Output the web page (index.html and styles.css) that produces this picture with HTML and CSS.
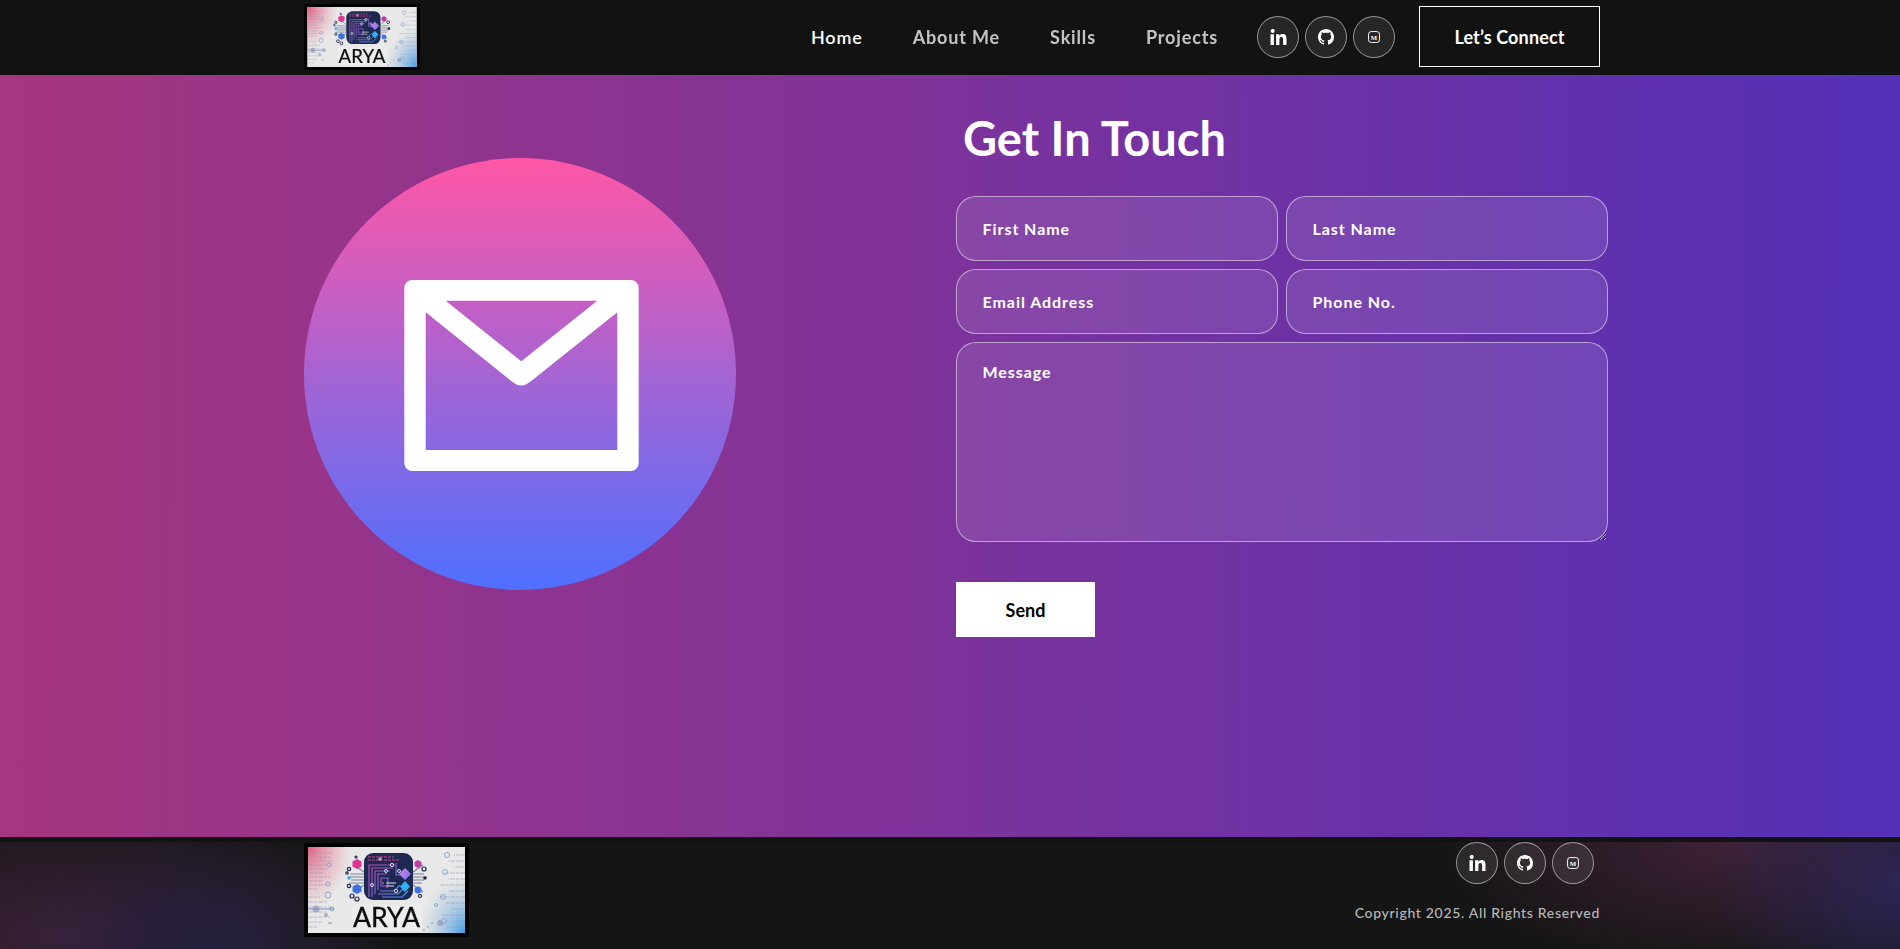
FILE: index.html
```html
<!DOCTYPE html>
<html lang="en">
<head>
<meta charset="utf-8">
<title>Arya</title>
<link rel="stylesheet" href="styles.css">
</head>
<body>
<svg class="defs" width="0" height="0" aria-hidden="true">
  <defs>
    <radialGradient id="pinkCorner" cx="0" cy="0" r="1">
      <stop offset="0" stop-color="#e45a7c"/>
      <stop offset=".55" stop-color="#e98da4" stop-opacity=".55"/>
      <stop offset="1" stop-color="#e8a0b0" stop-opacity="0"/>
    </radialGradient>
    <radialGradient id="blueCorner" cx="1" cy="1" r="1">
      <stop offset="0" stop-color="#3c9fe8"/>
      <stop offset=".5" stop-color="#8ab8e2" stop-opacity=".6"/>
      <stop offset="1" stop-color="#a9c4de" stop-opacity="0"/>
    </radialGradient>
    <linearGradient id="chipTrace" gradientUnits="userSpaceOnUse" x1="58" y1="8" x2="104" y2="52">
      <stop offset="0" stop-color="#e83d9c"/>
      <stop offset=".5" stop-color="#8a63d8"/>
      <stop offset="1" stop-color="#2fb0f0"/>
    </linearGradient>
    <linearGradient id="diamondTop" x1="0" y1="0" x2="1" y2="1">
      <stop offset="0" stop-color="#e07be8"/>
      <stop offset="1" stop-color="#6d7cf4"/>
    </linearGradient>
    <linearGradient id="circleFill" x1="0" y1="0" x2="0" y2="1">
      <stop offset="0" stop-color="#ff57a6"/>
      <stop offset="1" stop-color="#4e70ff"/>
    </linearGradient>
    <symbol id="logo" viewBox="0 0 157 86">
      <rect width="157" height="86" fill="#e7e8e7"/>
      <rect width="44" height="60" fill="url(#pinkCorner)"/>
      <rect x="112" y="30" width="45" height="56" fill="url(#blueCorner)"/>
      <g stroke="#8f93ad" stroke-width=".9" opacity=".6" stroke-dasharray="5 1 3 1">
        <path d="M0 6H26M0 10H22M0 14H24M0 18H18M0 22H20M0 26H16M0 30H22M0 34H14M0 38H18M0 42H10M0 50H12M0 55H20M0 60H24M0 65H18M0 70H22M0 75H14M0 80H10"/>
        <path d="M157 8H146M157 14H140M157 20H146M157 26H136M157 32H140M157 38H132M157 44H142M157 50H130M157 56H138M157 62H144M157 68H134M157 74H146M157 80H138"/>
      </g>
      <g fill="none" stroke="#7f9cc8" stroke-width="1" opacity=".85">
        <circle cx="21" cy="18" r="2"/><circle cx="20" cy="37" r="2"/><circle cx="20" cy="48" r="3"/>
        <circle cx="24" cy="62" r="2"/><circle cx="139" cy="8" r="2.5"/><circle cx="137" cy="25" r="2.5"/>
        <circle cx="135" cy="50" r="2.5"/><circle cx="136" cy="74" r="2.5"/><circle cx="128" cy="58" r="1.5"/>
      </g>
      <g fill="#9aa0bc" opacity=".8">
        <circle cx="8" cy="62" r="3.5"/><circle cx="18" cy="68" r="2"/><circle cx="132" cy="76" r="3"/>
        <circle cx="120" cy="80" r="1"/><circle cx="124" cy="76" r="1"/><circle cx="116" cy="83" r="1"/>
      </g>
      <path d="M0 62H26M20 76H24" stroke="#7f8db8" stroke-width="1"/>
      <g stroke="#7d8299" stroke-width="1.1" fill="none">
        <path d="M42 27H57M40 30H57M43 33H57M41 36H57M105 27H116M105 30H118M105 33H116M105 36H114"/>
        <path d="M46 18L56 25M115 18L105 25M46 45L56 38M115 45L105 38"/>
      </g>
      <g fill="none" stroke="#232a4c" stroke-width="1.2">
        <circle cx="41" cy="22" r="1.7"/><circle cx="39" cy="26" r="1.2"/><circle cx="41" cy="39" r="1.7"/>
        <circle cx="44" cy="49" r="2"/><circle cx="49" cy="52" r="2"/><circle cx="116" cy="22" r="2"/>
        <circle cx="112" cy="49" r="1.5"/><circle cx="48" cy="10" r="1"/>
      </g>
      <circle cx="117" cy="31" r="1.8" fill="#232a4c"/>
      <circle cx="41" cy="31" r="1.7" fill="#35a8f2"/>
      <path d="M49 12L53.500 14.500V19.500L49 22 44.500 19.500V14.500Z" fill="#e03590"/>
      <path d="M110 13L113.500 15V19L110 21 106.500 19V15Z" fill="#c23ca8"/>
      <path d="M49 37L53.500 39.500V44.500L49 47 44.500 44.500V39.500Z" fill="#3f6fe2"/>
      <circle cx="110" cy="43" r="3.500" fill="#3e74e6"/>
      <rect x="56" y="6" width="49" height="47" rx="9" fill="#1d2950"/>
      <g fill="none" stroke="url(#chipTrace)" stroke-width="1.1">
        <path d="M60 13H92M60 10H86" stroke="#d8408f" stroke-dasharray="3 1"/>
        <path d="M61 50V18H87M64 50V21H85M67 47V24H82M70 43V27H79M73 31H80V39H73Z"/>
        <path d="M72 44H86L92 38M70 47H90L96 41M74 50H94L100 44M88 16V28H97"/>
      </g>
      <path d="M78 36H88M78 39H86" stroke="#dfe4ee" stroke-width="1"/>
      <circle cx="75" cy="36" r="1" fill="#e2408f"/>
      <circle cx="79" cy="40" r="1" fill="#e2408f"/>
      <path d="M97 21L103 27 97 33 91 27Z" fill="url(#diamondTop)"/>
      <path d="M97 34L102 39.500 97 45 92 39.500Z" fill="#2fb0f4"/>
      <g fill="none" stroke="#d6dcea" stroke-width="1">
        <circle cx="84" cy="18" r="1.700"/><circle cx="78" cy="24" r="1.500"/><circle cx="91" cy="24" r="1.500"/>
        <circle cx="64" cy="38" r="1.500"/><circle cx="88" cy="44" r="1.700"/><circle cx="72" cy="12" r="1.200"/>
      </g>
      <rect x="44" y="57" width="70" height="27" fill="#ececec"/>
      <text class="logo-word" x="78.500" y="80" text-anchor="middle" textLength="67" lengthAdjust="spacingAndGlyphs">ARYA</text>
    </symbol>
    <symbol id="ic-linkedin" viewBox="0 0 16 16">
      <path fill="#fff" d="M0 5.3h3.4V16H0zM1.700 0a2 2 0 1 1 0 3.900 2 2 0 0 1 0-3.900zM5.600 5.300h3.200v1.500c.5-.9 1.600-1.800 3.300-1.800 3.400 0 3.900 2.200 3.900 5.100V16h-3.400v-5.100c0-1.300 0-2.900-1.700-2.900s-2 1.400-2 2.800V16H5.600z"/>
    </symbol>
    <symbol id="ic-github" viewBox="0 0 16 16">
      <path fill="#fff" d="M8 0C3.580 0 0 3.580 0 8c0 3.540 2.290 6.530 5.470 7.590.4.070.55-.17.55-.38 0-.19-.01-.82-.01-1.490-2.010.37-2.530-.49-2.690-.94-.09-.23-.48-.94-.82-1.130-.28-.15-.68-.52-.01-.53.63-.01 1.080.58 1.230.82.72 1.210 1.870.87 2.330.66.07-.52.28-.87.51-1.070-1.780-.2-3.640-.89-3.640-3.950 0-.87.31-1.590.82-2.150-.08-.2-.36-1.020.08-2.120 0 0 .67-.21 2.200.82.64-.18 1.320-.27 2-.27s1.360.09 2 .27c1.530-1.040 2.200-.82 2.200-.82.44 1.100.16 1.920.08 2.120.51.56.82 1.270.82 2.150 0 3.070-1.870 3.750-3.650 3.950.29.25.54.73.54 1.480 0 1.070-.01 1.930-.01 2.200 0 .21.15.46.55.38A8.010 8.010 0 0 0 16 8c0-4.420-3.580-8-8-8z"/>
    </symbol>
    <symbol id="ic-medium" viewBox="0 0 16 16">
      <rect x=".75" y=".75" width="14.500" height="14.500" rx="3.500" fill="none" stroke="#fff" stroke-width="1.300"/>
      <text class="medium-mark" x="8" y="11.400" text-anchor="middle">M</text>
    </symbol>
  </defs>
</svg>

<header class="topbar">
  <div class="shell topbar-inner">
    <a class="logo logo-small" href="#"><svg class="logo-art"><use href="#logo"/></svg></a>
    <nav class="nav-links">
      <a class="nav-link is-active" href="#">Home</a>
      <a class="nav-link" href="#">About Me</a>
      <a class="nav-link" href="#">Skills</a>
      <a class="nav-link" href="#">Projects</a>
    </nav>
    <div class="socials">
      <a class="social" href="#"><svg class="ic-in"><use href="#ic-linkedin"/></svg></a>
      <a class="social" href="#"><svg class="ic-gh"><use href="#ic-github"/></svg></a>
      <a class="social" href="#"><svg class="ic-md"><use href="#ic-medium"/></svg></a>
    </div>
    <button class="connect" type="button">Let’s Connect</button>
  </div>
</header>

<main class="contact">
  <div class="shell contact-grid">
    <div class="badge">
      <svg class="badge-art" viewBox="0 0 432 432">
        <circle cx="216" cy="216" r="216" fill="url(#circleFill)"/>
        <path fill="#fff" fill-rule="evenodd" d="M108.300 122H326.700A8 8 0 0 1 334.700 130V305A8 8 0 0 1 326.700 313H108.300A8 8 0 0 1 100.300 305V130A8 8 0 0 1 108.300 122ZM141.700 142.700H293.300L217.300 203.300ZM121.700 154.300L208.500 224Q217.300 231 226 224L313.300 154.300V292H121.700Z"/>
      </svg>
    </div>
    <section class="form-col">
      <h1 class="form-title">Get In Touch</h1>
      <form class="form-grid">
        <input class="field" type="text" placeholder="First Name">
        <input class="field" type="text" placeholder="Last Name">
        <input class="field" type="email" placeholder="Email Address">
        <input class="field" type="tel" placeholder="Phone No.">
        <textarea class="field field-message" placeholder="Message"></textarea>
        <button class="send" type="submit">Send</button>
      </form>
    </section>
  </div>
</main>

<footer class="footer">
  <div class="shell footer-inner">
    <a class="logo logo-large" href="#"><svg class="logo-art"><use href="#logo"/></svg></a>
    <div class="footer-side">
      <div class="socials socials-footer">
        <a class="social" href="#"><svg class="ic-in"><use href="#ic-linkedin"/></svg></a>
        <a class="social" href="#"><svg class="ic-gh"><use href="#ic-github"/></svg></a>
        <a class="social" href="#"><svg class="ic-md"><use href="#ic-medium"/></svg></a>
      </div>
      <p class="copyright">Copyright 2025. All Rights Reserved</p>
    </div>
  </div>
</footer>
</body>
</html>
```
FILE: styles.css
```css
* { box-sizing: border-box; }
html, body { height: 100%; }
body {
  margin: 0;
  min-height: 949px;
  display: flex;
  flex-direction: column;
  overflow: hidden;
  background: #121212;
  color: #fff;
  font-family: "Lato", "Noto Sans", sans-serif;
}
a { color: inherit; text-decoration: none; }
.defs { position: absolute; }
.shell { width: 1296px; margin-left: 304px; }

.topbar { height: 75px; padding-bottom: 1px; background: #121212; flex: none; }
.topbar-inner { height: 100%; display: flex; align-items: center; }
.logo { display: block; background: #000; flex: none; }
.logo-art { display: block; width: 100%; height: 100%; filter: blur(.35px); }
.logo-small { width: 116px; height: 66px; padding: 3px; margin-right: auto; }
.logo-large { width: 165px; height: 94px; padding: 4px; margin-top: 1px; }
.logo-word { font-family: "Lato", "Liberation Sans", sans-serif; font-size: 27px; fill: #0c0c0c; stroke: #0c0c0c; stroke-width: .35px; }

.nav-links { display: flex; gap: 50px; }
.nav-link { font-size: 18px; font-weight: 700; letter-spacing: .85px; opacity: .75; }
.nav-link.is-active { opacity: 1; font-weight: 600; }

.socials { display: flex; gap: 6px; margin-left: 39px; }
.social {
  width: 42px; height: 42px;
  display: flex; align-items: center; justify-content: center;
  border: 1px solid rgba(255,255,255,.5);
  border-radius: 50%;
  background: rgba(217,217,217,.1);
}
.ic-in { width: 17px; height: 16px; }
.ic-gh { width: 16px; height: 16px; }
.ic-md { width: 12px; height: 12px; }
.medium-mark { font-family: "Liberation Serif", serif; font-weight: 700; font-size: 9px; fill: #fff; }

.connect {
  width: 181px; height: 61px;
  margin: -1px 0 0 24px;
  background: transparent;
  border: 1px solid #fff;
  color: #fff;
  font: 700 18px "Lato", sans-serif;
  letter-spacing: .15px;
}

.contact {
  height: 762px; flex: none;
  background: linear-gradient(90.21deg, #AA367C -5.91%, #4A2FBD 111.58%);
}
.contact-grid { width: 1304px; display: flex; justify-content: space-between; }
.badge { width: 432px; padding-top: 83px; }
.badge-art { display: block; width: 432px; height: 432px; }

.form-col { width: 652px; }
.form-title { margin: 37px 0 31px 7px; font-size: 47px; line-height: 53px; font-weight: 700; }
.form-grid { display: grid; grid-template-columns: 322px 322px; gap: 8px; }
.field {
  width: 100%; height: 65px;
  padding: 18px 25.500px;
  background: rgba(255,255,255,.1);
  border: 1px solid rgba(255,255,255,.5);
  border-radius: 20px;
  color: #fff;
  font: 700 16px "Lato", sans-serif;
  letter-spacing: .95px;
  outline: none;
}
.field::placeholder { color: #fff; opacity: 1; }
.field-message { grid-column: 1 / -1; height: 200px; padding-top: 19px; display: block; }
.send {
  grid-column: 1 / -1;
  width: 139px; height: 55px;
  margin-top: 32px;
  background: #fff;
  border: 0;
  color: #000;
  font: 700 18px "Lato", sans-serif;
}

.footer {
  flex: 1;
  border-top: 5px solid #121212;
  background:
    radial-gradient(190px 120px at 205px 108px, rgba(36,32,66,.85), rgba(36,32,66,0) 100%),
    radial-gradient(330px 150px at 70px 95px, rgba(66,36,62,.85), rgba(66,36,62,0) 100%),
    radial-gradient(190px 140px at 1900px 45px, rgba(46,38,92,.85), rgba(46,38,92,0) 100%),
    radial-gradient(300px 135px at 1735px 0, rgba(70,36,62,.85), rgba(70,36,62,0) 100%),
    #151515;
}
.footer-inner { display: flex; justify-content: space-between; align-items: flex-start; height: 100%; }
.footer-side { display: flex; flex-direction: column; align-items: flex-end; }
.socials-footer { margin: 0 6px 0 0; }
.copyright { margin: 20px 0 0; font-size: 14px; line-height: 17px; font-weight: 500; letter-spacing: .68px; color: #b8b8b8; }
```
